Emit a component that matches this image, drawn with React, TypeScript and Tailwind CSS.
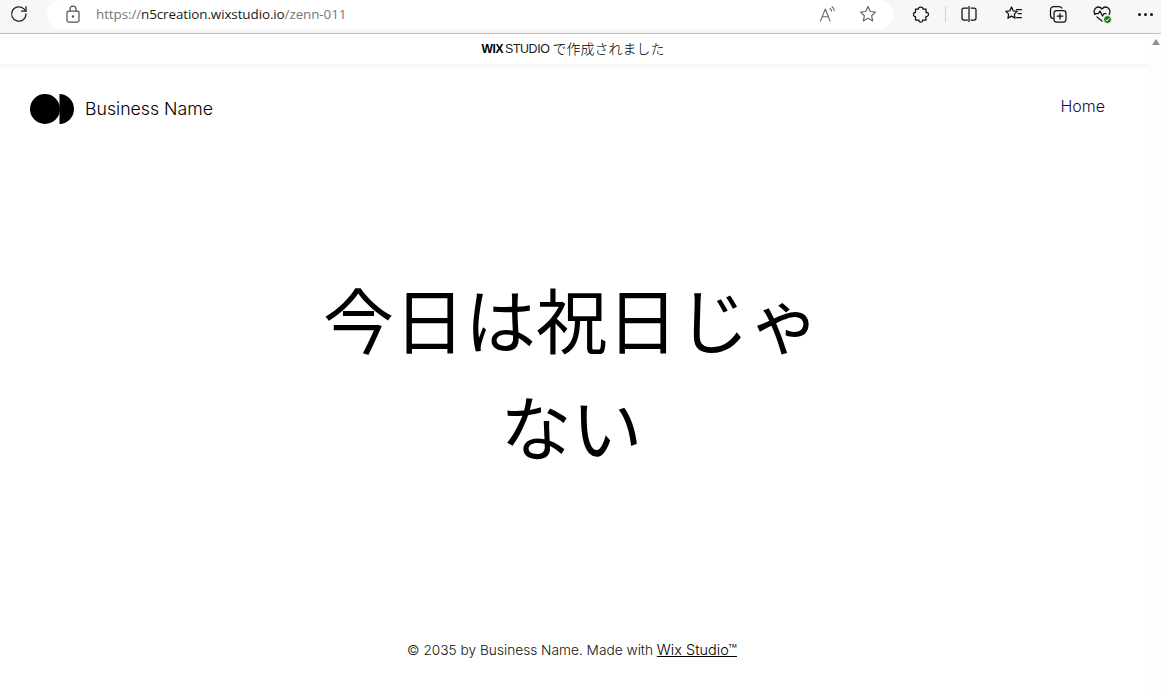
import React from "react";

const Ic = ({ children, w = 20, cls = "" }: { children: React.ReactNode; w?: number; cls?: string }) => (
  <svg width={w} height={w} viewBox="0 0 20 20" fill="none" stroke="currentColor" strokeWidth="1.25" strokeLinecap="round" strokeLinejoin="round" className={cls}>
    {children}
  </svg>
);

export default function App() {
  return (
    <div className="w-[1161px] h-[697px] overflow-hidden bg-white flex flex-col text-black font-['Inter','Liberation_Sans',sans-serif]">
      <header className="h-[34px] shrink-0 bg-[#f7f7f7] border-b border-[#c0c0c0] flex items-center">
        <div className="w-[38px] flex justify-center text-[#222] -mt-[5px]">
          <Ic>
            <path d="M17 10a7.200 7.200 0 1 1-2.100-5.100L17 7" />
            <path d="M17 2.500V7h-4.500" />
          </Ic>
        </div>
        <div className="ml-[9px] w-[846px] h-[29px] -mt-[5px] bg-white rounded-[15px] flex items-center">
          <div className="ml-[16px] text-[#555]">
            <Ic w={20}>
              <rect x="4" y="7" width="12" height="11" rx="1.500" />
              <path d="M7 7V5a3 3 0 0 1 6 0v2" />
              <circle cx="10" cy="12.500" r=".6" fill="currentColor" />
            </Ic>
          </div>
          <div className="ml-[13px] text-[13.450px] leading-[20px] font-['Open_Sans','Liberation_Sans',sans-serif] tracking-[-0.1px] text-[#767676]">
            https://<span className="text-[#1a1a1a]">n5creation.wixstudio.io</span>/zenn-011
          </div>
          <div className="ml-auto flex items-center gap-[21px] pr-[15px] text-[#6b6b6b]">
            <svg width="18" height="18" viewBox="0 0 18 18" fill="none" stroke="currentColor" strokeWidth="1.100" strokeLinecap="round" strokeLinejoin="round">
              <path d="M1.500 16 6.300 4l4.800 12M3.200 11.800h6.200" />
              <path d="M11 3.500c1 .7 1.500 1.500 1.600 2.600M13 1.800c1.400 1 2.100 2.300 2.200 3.800" />
            </svg>
            <Ic>
              <path d="m10 2.500 2.300 5 5.200.6-3.900 3.600 1.100 5.300-4.700-2.700-4.700 2.700 1.100-5.300L2.500 8.100l5.200-.6z" />
            </Ic>
          </div>
        </div>
        <div className="ml-[18px] flex items-center -mt-[5px] text-[#111]">
          <Ic>
            <path d="M7.500 5C7 2.600 12 2.200 12 5h3v3.500c3-1 3.500 4.500 0 4V16h-3.500c.8 2.800-4.200 2.800-3.500 0H4.500v-3.500c-2.700.5-2.700-4.500 0-4V5z" />
          </Ic>
          <div className="ml-[14px] w-px h-[16px] bg-[#d0d0d0]" />
          <div className="ml-[13px]">
            <Ic>
              <path d="M8.500 4H5a2 2 0 0 0-2 2v8a2 2 0 0 0 2 2h3.500" />
              <path d="M12 4h3a2 2 0 0 1 2 2v8a2 2 0 0 1-2 2h-3" />
              <path d="M10 2.500v15" />
            </Ic>
          </div>
          <div className="ml-[25px]">
            <Ic>
              <path d="m7.500 3 1.800 3.900 3.900.5-2.900 2.700.8 4-3.600-2-3.600 2 .8-4-2.900-2.700 3.900-.5z" />
              <path d="M12.500 5.500h5M14 9.500h3.500M12.500 13.500h5" />
            </Ic>
          </div>
          <div className="ml-[24px]">
            <Ic>
              <path d="M5 14.500c-1.500-.3-2.500-1.500-2.500-3V6c0-1.900 1.600-3.500 3.500-3.500h5c1.300 0 2.300.6 2.900 1.600" />
              <rect x="6" y="6.500" width="12" height="11.500" rx="2.500" />
              <path d="M12 9.500v5.500M9.300 12.200h5.400" />
            </Ic>
          </div>
          <div className="ml-[24px] relative">
            <Ic>
              <path d="M3 10.500C1.500 8.500 1.800 5.500 3.800 4c2-1.400 4.600-1 6.200 1 1.600-2 4.200-2.400 6.200-1 2 1.500 2.300 4.500.8 6.500" />
              <path d="M2.500 9.500h4l1.500-2.500 2.500 5 1.500-2.500h2" />
              <path d="m5 13 5 4" />
            </Ic>
            <div className="absolute left-[11px] top-[11px] w-[9px] h-[9px] rounded-full bg-[#107c10] border border-white flex items-center justify-center">
              <svg width="7" height="7" viewBox="0 0 7 7" fill="none" stroke="white" strokeWidth="1">
                <path d="m1.500 3.500 1.500 1.500 2.500-3" />
              </svg>
            </div>
          </div>
          <div className="ml-[26px] flex gap-[3px]">
            <span className="w-[3px] h-[3px] rounded-full bg-[#111]" />
            <span className="w-[3px] h-[3px] rounded-full bg-[#111]" />
            <span className="w-[3px] h-[3px] rounded-full bg-[#111]" />
          </div>
        </div>
      </header>

      <div className="flex-1 flex min-h-0">
        <div className="w-[1150px] flex flex-col">
          <div className="h-[30px] shrink-0 flex items-center justify-center shadow-[0_2px_6px_rgba(60,70,90,0.07)] pr-[4px]">
            <span className="text-[12px] font-bold tracking-[-0.4px] font-['Liberation_Sans',sans-serif]">WIX</span>
            <span className="ml-[2px] text-[12.400px] tracking-[-0.4px] font-['Liberation_Sans',sans-serif] text-[#222]">STUDIO</span>
            <span className="ml-[3px] text-[14px] font-light -mt-[1px] font-['Noto_Sans_CJK_JP',sans-serif] text-black">で作成されました</span>
          </div>

          <div className="flex justify-between pl-[30px] pr-[45px] mt-[30px]">
            <div className="flex items-center gap-[11px]">
              <svg width="44" height="30" viewBox="0 0 44 30" fill="#000">
                <circle cx="15" cy="15" r="15" />
                <path d="M29.500 0c8.200.2 14.500 6.800 14.500 15s-6.300 14.800-14.500 15z" />
              </svg>
              <span className="text-[17.700px] leading-[30px] font-light">Business Name</span>
            </div>
            <span className="text-[16px] leading-[24px] font-light text-[#11114a]">Home</span>
          </div>

          <h1 className="mt-[140px] text-center font-['Noto_Sans_CJK_JP',sans-serif] font-normal text-[71px] leading-[107px] pr-[7px]">
            今日は祝日じゃ
            <br />
            ない
          </h1>

          <p className="mt-[162px] text-center text-[13.700px] leading-[20px] font-light text-[#111] pr-[6px]">
            © 2035 by Business Name. Made with <a className="underline text-black text-[14.500px]">Wix Studio™</a>
          </p>
        </div>
        <div className="w-[11px] bg-[#fdfdfd] flex justify-center pt-[5px]">
          <div className="w-0 h-0 border-l-[4px] border-r-[4px] border-b-[6px] border-l-transparent border-r-transparent border-b-[#909090]" />
        </div>
      </div>
    </div>
  );
}
